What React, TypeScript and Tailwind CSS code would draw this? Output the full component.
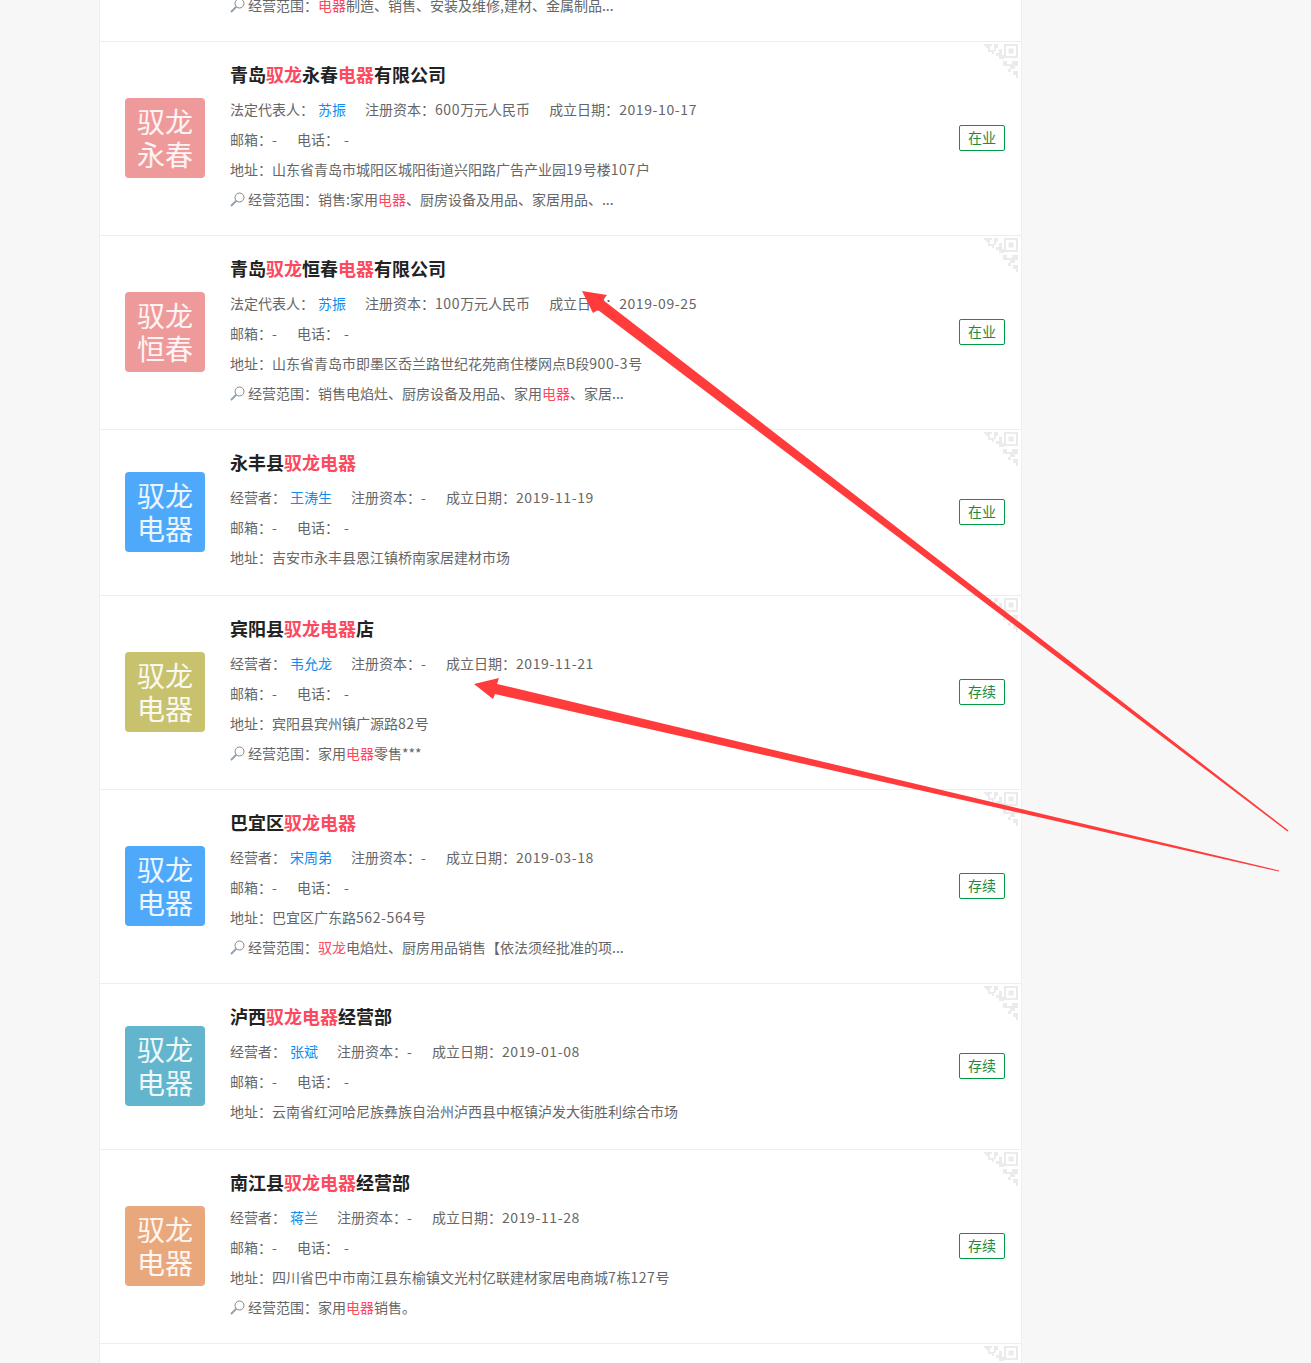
const font = { fontFamily: '"Noto Sans CJK SC", sans-serif' };

type Part = string | { em: string };

interface Company {
  name: Part[];
  ownerLabel: string;
  owner: string;
  capital: string;
  date: string;
  address: string;
  scope?: Part[];
  status: string;
  logo: [string, string];
  logoColor: string;
}

const companies: Company[] = [
  {
    name: ["青岛", { em: "驭龙" }, "永春", { em: "电器" }, "有限公司"],
    ownerLabel: "法定代表人：",
    owner: "苏振",
    capital: "600万元人民币",
    date: "2019-10-17",
    address: "山东省青岛市城阳区城阳街道兴阳路广告产业园19号楼107户",
    scope: ["销售:家用", { em: "电器" }, "、厨房设备及用品、家居用品、..."],
    status: "在业",
    logo: ["驭龙", "永春"],
    logoColor: "bg-[#ef9a9a]",
  },
  {
    name: ["青岛", { em: "驭龙" }, "恒春", { em: "电器" }, "有限公司"],
    ownerLabel: "法定代表人：",
    owner: "苏振",
    capital: "100万元人民币",
    date: "2019-09-25",
    address: "山东省青岛市即墨区岙兰路世纪花苑商住楼网点B段900-3号",
    scope: ["销售电焰灶、厨房设备及用品、家用", { em: "电器" }, "、家居..."],
    status: "在业",
    logo: ["驭龙", "恒春"],
    logoColor: "bg-[#ef9a9a]",
  },
  {
    name: ["永丰县", { em: "驭龙电器" }],
    ownerLabel: "经营者：",
    owner: "王涛生",
    capital: "-",
    date: "2019-11-19",
    address: "吉安市永丰县恩江镇桥南家居建材市场",
    status: "在业",
    logo: ["驭龙", "电器"],
    logoColor: "bg-[#4ea9fb]",
  },
  {
    name: ["宾阳县", { em: "驭龙电器" }, "店"],
    ownerLabel: "经营者：",
    owner: "韦允龙",
    capital: "-",
    date: "2019-11-21",
    address: "宾阳县宾州镇广源路82号",
    scope: ["家用", { em: "电器" }, "零售***"],
    status: "存续",
    logo: ["驭龙", "电器"],
    logoColor: "bg-[#c8c26e]",
  },
  {
    name: ["巴宜区", { em: "驭龙电器" }],
    ownerLabel: "经营者：",
    owner: "宋周弟",
    capital: "-",
    date: "2019-03-18",
    address: "巴宜区广东路562-564号",
    scope: [{ em: "驭龙" }, "电焰灶、厨房用品销售【依法须经批准的项..."],
    status: "存续",
    logo: ["驭龙", "电器"],
    logoColor: "bg-[#4ea9fb]",
  },
  {
    name: ["泸西", { em: "驭龙电器" }, "经营部"],
    ownerLabel: "经营者：",
    owner: "张斌",
    capital: "-",
    date: "2019-01-08",
    address: "云南省红河哈尼族彝族自治州泸西县中枢镇泸发大街胜利综合市场",
    status: "存续",
    logo: ["驭龙", "电器"],
    logoColor: "bg-[#62b5cd]",
  },
  {
    name: ["南江县", { em: "驭龙电器" }, "经营部"],
    ownerLabel: "经营者：",
    owner: "蒋兰",
    capital: "-",
    date: "2019-11-28",
    address: "四川省巴中市南江县东榆镇文光村亿联建材家居电商城7栋127号",
    scope: ["家用", { em: "电器" }, "销售。"],
    status: "存续",
    logo: ["驭龙", "电器"],
    logoColor: "bg-[#e9a87c]",
  },
];

// digits run a bit wider in the reference's font
function Num({ text }: { text: string }) {
  return (
    <span className="min-w-[6px]">
      {text.split(/([\d-]+)/).map((s, i) =>
        i % 2 === 1 ? (
          <span key={i} className="tracking-[0.6px]">
            {s}
          </span>
        ) : (
          s
        ),
      )}
    </span>
  );
}

function Parts({ parts }: { parts: Part[] }) {
  return (
    <>
      {parts.map((p, i) =>
        typeof p === "string" ? (
          <span key={i}>{p}</span>
        ) : (
          <span key={i} className="text-[#fd485e]">
            {p.em}
          </span>
        ),
      )}
    </>
  );
}

function Magnifier() {
  return (
    <svg width="15" height="15" viewBox="0 0 15 15" fill="none" className="mr-[3px] shrink-0">
      <circle cx="9.5" cy="5.5" r="4.5" stroke="#858585" strokeWidth="1" />
      <path d="M6 9L1.5 13.5" stroke="#8fa4b8" strokeWidth="2" strokeLinecap="round" />
    </svg>
  );
}

// faint qr corner, cut on the diagonal
function QrCorner() {
  return (
    <svg width="34" height="34" viewBox="0 0 34 34" className="absolute right-[3px] top-[2px]">
      <g fill="#ebebeb">
        <path d="M0 0H8V2H6V6H10V10H8V8H4V4H2V2H0Z" />
        <path d="M10 0H14V4H12V7H10Z" />
        <path d="M20 0H34V14H20ZM22 2V12H32V2ZM24.5 4.5H29.5V9.5H24.5Z" fillRule="evenodd" />
        <path d="M15 5H18V11H20V15H15V12H12V9H15Z" />
        <path d="M19 17H23V20H28V17H34V22H31V25H26V22H19Z" />
        <path d="M24 25H27V28H24Z" />
        <path d="M29 27H34V34H32V31H29Z" />
      </g>
    </svg>
  );
}

function ScopeLine({ scope }: { scope: Part[] }) {
  return (
    <div className="flex h-[30px] items-center">
      <Magnifier />
      <span>经营范围：</span>
      <Parts parts={scope} />
    </div>
  );
}

function Row({ c }: { c: Company }) {
  // rows without a scope line sit 1px lower on the logo and badge
  const nudge = c.scope ? "" : "mt-[2px]";
  return (
    <div className={`relative flex items-center border-b border-[#eeeeee] pl-[25px] pr-4 pt-5 ${c.scope ? "pb-[21px]" : "pb-[23px]"}`}>
      <QrCorner />
      <div className={`flex h-20 w-20 shrink-0 flex-col items-center justify-center rounded text-[28px] leading-[33px] text-white/90 ${c.logoColor} ${nudge}`}>
        <span>{c.logo[0]}</span>
        <span>{c.logo[1]}</span>
      </div>
      <div className="ml-[25px] min-w-0 flex-1">
        <div className="mb-2 text-lg leading-6 font-bold text-[#222222]">
          <Parts parts={c.name} />
        </div>
        <div className="flex h-[30px] items-center">
          <span>{c.ownerLabel}</span>
          <span className="ml-1 text-[#128bed]">{c.owner}</span>
          <span className="ml-[19px]">注册资本：</span>
          <Num text={c.capital} />
          <span className="ml-[19px]">成立日期：</span>
          <Num text={c.date} />
        </div>
        <div className="flex h-[30px] items-center">
          <span>邮箱：</span>
          <span className="w-[25px]">-</span>
          <span>电话：</span>
          <span className="ml-[5px]">-</span>
        </div>
        <div className="flex h-[30px] items-center">
          <span>地址：</span>
          <Num text={c.address} />
        </div>
        {c.scope && <ScopeLine scope={c.scope} />}
      </div>
      <span className={`flex h-[26px] w-[46px] shrink-0 items-center justify-center rounded-xs border border-[#009a44] pb-0.5 text-sm text-[#1f8a3c] ${nudge}`}>
        {c.status}
      </span>
    </div>
  );
}

export default function App() {
  return (
    <div className="relative h-[1363px] overflow-hidden bg-[#f7f7f7] text-sm text-[#666666]" style={font}>
      <div className="ml-[99px] w-[923px] border-x border-[#eeeeee] bg-white">
        <div className="flex h-[42px] items-start border-b border-[#eeeeee] pl-[130px]">
          <div className="-mt-[10px]">
            <ScopeLine scope={[{ em: "电器" }, "制造、销售、安装及维修,建材、金属制品..."]} />
          </div>
        </div>
        {companies.map((c, i) => (
          <Row key={i} c={c} />
        ))}
        <div className="relative h-6">
          <QrCorner />
        </div>
      </div>
      {/* annotation arrows drawn on top of the screenshot */}
      <svg width="1311" height="1363" className="pointer-events-none absolute left-0 top-0">
        <polygon points="582,291 607,295 603,300 1288.5,830.5 1287.5,831.5 598,310 593,313" fill="#ff3b3b" />
        <polygon points="474,684 499,678 497,684 1279,870.5 1279,871.5 495,694 493,699" fill="#ff3b3b" />
      </svg>
    </div>
  );
}
